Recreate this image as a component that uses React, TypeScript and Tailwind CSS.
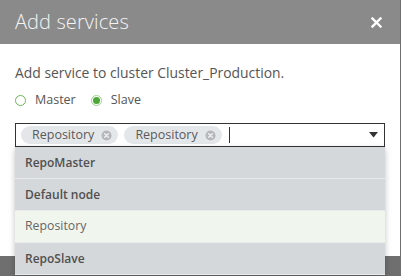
import React from "react";

const font = { fontFamily: '"Open Sans", "Noto Sans", Arial, sans-serif' };

function Tag() {
  return (
    <div className="flex items-center h-[18px] rounded-full bg-[#e4e7ea] pl-[11px] pr-[6px] gap-[7px]">
      <span className="text-[12.5px] leading-none text-[#5a5a5a]">Repository</span>
      <svg width="11" height="11" viewBox="0 0 12 12">
        <circle cx="6" cy="6" r="5.5" fill="#b5b8bb" />
        <path d="M4 4 L8 8 M8 4 L4 8" stroke="#eceeef" strokeWidth="1.6" strokeLinecap="round" />
      </svg>
    </div>
  );
}

function Row({ children, bold = true, active = false }: { children: React.ReactNode; bold?: boolean; active?: boolean }) {
  return (
    <div
      className={
        "h-[32px] flex items-center pl-[10px] border-b border-[#e8eaec] " +
        (active ? "bg-[#f0f5ee]" : "bg-[#d5d8db]")
      }
    >
      <span
        className={
          bold
            ? "text-[12px] font-semibold text-[#505050]"
            : "text-[12.3px] font-normal text-[#666]"
        }
      >
        {children}
      </span>
    </div>
  );
}

export default function App() {
  return (
    <div className="w-[401px] h-[276px] bg-[#6f6f6f] overflow-hidden" style={font}>
      <div className="w-[400px] h-[256px] bg-white">
        <div className="h-[44px] bg-[#8a8a8a] flex items-center justify-between pl-[15px] pr-[18px]">
          <span className="text-[20px] font-light text-[#f4f4f4] tracking-[0.1px]">Add services</span>
          <svg width="11" height="11" viewBox="0 0 11 11">
            <path d="M1.5 1.5 L9.5 9.5 M9.5 1.5 L1.5 9.5" stroke="#ffffff" strokeWidth="2.4" strokeLinecap="square" />
          </svg>
        </div>
        <div className="px-[15px] pt-[20px]">
          <div className="text-[13.9px] leading-[18px] text-[#555]">Add service to cluster Cluster_Production.</div>
          <div className="flex items-center mt-[9px] h-[18px] text-[12.5px] text-[#555]">
            <span className="w-[11px] h-[11px] rounded-full border border-[#6cbb55] mr-[9px]" />
            <span className="mr-[15px]">Master</span>
            <span className="w-[11px] h-[11px] rounded-full border border-[#9ed48c] flex items-center justify-center mr-[9px]">
              <span className="w-[7px] h-[7px] rounded-full bg-[#4ea63a]" />
            </span>
            <span>Slave</span>
          </div>
          <div className="relative mt-[14px]">
            <div className="h-[24px] border border-[#333] flex items-center pl-[5px] pr-[6px] gap-[6px]">
              <Tag />
              <Tag />
              <span className="w-px h-[16px] bg-[#333] ml-[1px]" />
              <span className="flex-1" />
              <svg width="9" height="6" viewBox="0 0 9 6">
                <path d="M0 0 L9 0 L4.5 5.5 Z" fill="#333" />
              </svg>
            </div>
            <div className="absolute left-0 right-0 top-full shadow-[0_2px_6px_rgba(0,0,0,0.25)]">
              <Row>RepoMaster</Row>
              <Row>Default node</Row>
              <Row bold={false} active>
                Repository
              </Row>
              <Row>RepoSlave</Row>
            </div>
          </div>
        </div>
      </div>
    </div>
  );
}
